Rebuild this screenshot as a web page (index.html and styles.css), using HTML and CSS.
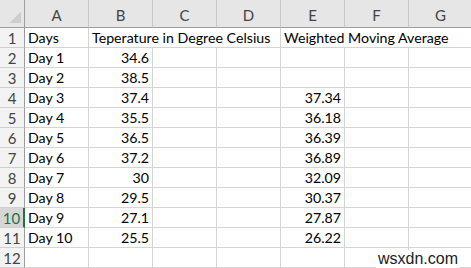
FILE: index.html
```html
<!DOCTYPE html>
<html>
  <head>
    <meta charset="utf-8" />
    <title>Weighted Moving Average</title>
    <link rel="stylesheet" href="styles.css">
  </head>
  <body>
    <div id="sheet">
      <div class="corner"><span class="triangle"></span></div>
      <div class="colHead">A</div>
      <div class="colHead">B</div>
      <div class="colHead">C</div>
      <div class="colHead">D</div>
      <div class="colHead">E</div>
      <div class="colHead">F</div>
      <div class="colHead">G</div>

      <div class="rowHead">1</div>
      <div class="cell">Days</div>
      <div class="cell span3">Teperature in Degree Celsius</div>
      <div class="cell span3">Weighted Moving Average</div>

      <div class="rowHead">2</div>
      <div class="cell">Day 1</div>
      <div class="cell num">34.6</div>
      <div class="cell"></div><div class="cell"></div><div class="cell"></div><div class="cell"></div><div class="cell"></div>

      <div class="rowHead">3</div>
      <div class="cell">Day 2</div>
      <div class="cell num">38.5</div>
      <div class="cell"></div><div class="cell"></div><div class="cell"></div><div class="cell"></div><div class="cell"></div>

      <div class="rowHead">4</div>
      <div class="cell">Day 3</div>
      <div class="cell num">37.4</div>
      <div class="cell"></div><div class="cell"></div>
      <div class="cell num">37.34</div>
      <div class="cell"></div><div class="cell"></div>

      <div class="rowHead">5</div>
      <div class="cell">Day 4</div>
      <div class="cell num">35.5</div>
      <div class="cell"></div><div class="cell"></div>
      <div class="cell num">36.18</div>
      <div class="cell"></div><div class="cell"></div>

      <div class="rowHead">6</div>
      <div class="cell">Day 5</div>
      <div class="cell num">36.5</div>
      <div class="cell"></div><div class="cell"></div>
      <div class="cell num">36.39</div>
      <div class="cell"></div><div class="cell"></div>

      <div class="rowHead">7</div>
      <div class="cell">Day 6</div>
      <div class="cell num">37.2</div>
      <div class="cell"></div><div class="cell"></div>
      <div class="cell num">36.89</div>
      <div class="cell"></div><div class="cell"></div>

      <div class="rowHead">8</div>
      <div class="cell">Day 7</div>
      <div class="cell num">30</div>
      <div class="cell"></div><div class="cell"></div>
      <div class="cell num">32.09</div>
      <div class="cell"></div><div class="cell"></div>

      <div class="rowHead">9</div>
      <div class="cell">Day 8</div>
      <div class="cell num">29.5</div>
      <div class="cell"></div><div class="cell"></div>
      <div class="cell num">30.37</div>
      <div class="cell"></div><div class="cell"></div>

      <div class="rowHead active">10</div>
      <div class="cell">Day 9</div>
      <div class="cell num">27.1</div>
      <div class="cell"></div><div class="cell"></div>
      <div class="cell num">27.87</div>
      <div class="cell"></div><div class="cell"></div>

      <div class="rowHead">11</div>
      <div class="cell">Day 10</div>
      <div class="cell num">25.5</div>
      <div class="cell"></div><div class="cell"></div>
      <div class="cell num">26.22</div>
      <div class="cell"></div><div class="cell"></div>

      <div class="rowHead">12</div>
      <div class="cell"></div><div class="cell"></div><div class="cell"></div><div class="cell"></div>
      <div class="cell"></div><div class="cell"></div><div class="cell"></div>

      <div class="watermark">wsxdn.com</div>
    </div>
  </body>
</html>
```

FILE: styles.css
```css
html {
  box-sizing: border-box;
}
*,
*:before,
*:after {
  box-sizing: inherit;
}
body {
  margin: 0;
  background: #fff;
  overflow: hidden;
  font-family: "Lato", "Liberation Sans", sans-serif;
  font-size: 14.2px;
  color: #000;
}
#sheet {
  position: relative;
  display: grid;
  grid-template-columns: 25px repeat(7, 64px);
  grid-template-rows: 28px repeat(12, 20px);
}
.corner,
.colHead {
  background: #e6e6e6;
  border-right: 1px solid #c8c8c8;
  border-bottom: 1px solid #9e9e9e;
}
.corner {
  position: relative;
  border-right-color: #9e9e9e;
}
.triangle {
  position: absolute;
  right: 3px;
  bottom: 4px;
  width: 11px;
  height: 11px;
  background: linear-gradient(to bottom right, transparent 50%, #cdcdcd 50%);
}
.colHead {
  display: flex;
  align-items: flex-end;
  justify-content: center;
  padding-bottom: 3px;
  color: #444;
  font-size: 15px;
}
.rowHead {
  background: #f3f3f3;
  border-right: 1px solid #9e9e9e;
  border-bottom: 1px solid #d0d0d0;
  display: flex;
  align-items: flex-end;
  justify-content: center;
  color: #444;
  line-height: 18px;
  font-size: 15px;
}
.rowHead.active {
  background: #d6d6d6;
  color: #217346;
  border-right: 2px solid #217346;
}
.cell {
  border-right: 1px solid #d4d4d4;
  border-bottom: 1px solid #d4d4d4;
  padding: 0 3px 0 3px;
  white-space: nowrap;
  line-height: 19px;
  display: flex;
  align-items: flex-end;
}
.num {
  justify-content: flex-end;
}
.span3 {
  grid-column: span 3;
}
.watermark {
  position: absolute;
  right: 11px;
  bottom: 0;
  padding: 0 2px;
  background: #fff;
  font-family: "Liberation Sans", sans-serif;
  font-size: 16px;
  line-height: 18px;
  color: #222;
}
```
